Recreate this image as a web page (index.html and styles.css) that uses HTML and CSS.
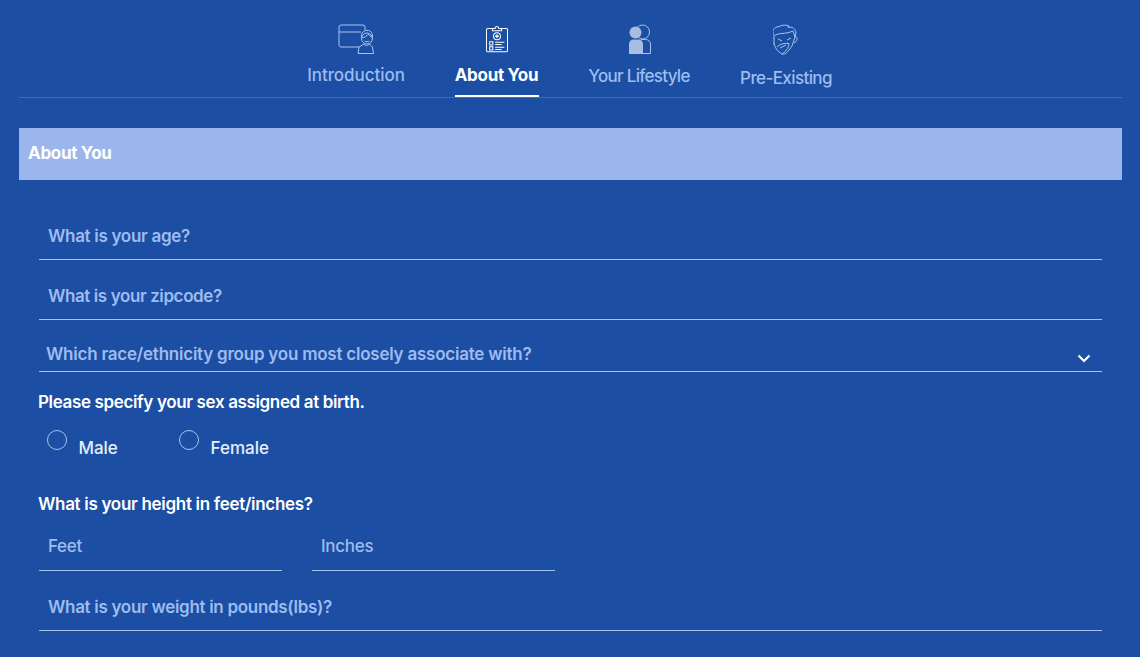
FILE: index.html
```html
<!DOCTYPE html>
<html lang="en">
<head>
<meta charset="utf-8">
<title>About You</title>
<link rel="stylesheet" href="styles.css">
</head>
<body>
<main class="page">
  <nav class="tabs">
    <a class="tab tab-intro">
      <svg class="icon" width="38" height="30" viewBox="-1 0 38 30" fill="none" stroke="currentColor" stroke-width="1">
        <path d="M21 23H3a2 2 0 0 1-2-2V3a2 2 0 0 1 2-2h22a2 2 0 0 1 2 2v3"/>
        <path d="M1 8h22"/>
        <circle cx="29" cy="14.500" r="5.500"/>
        <path d="M23.500 13c-1-4 3-7.500 7-6.500 3.500 1 5 4.500 3.500 8.500"/>
        <path d="M23.500 14c3-.5 6-2 7-4 .5 1.500 2 2.500 4 3"/>
        <path d="M26.500 17c1.500 1 3.500 1 5 0M26 20l-5 3-1 6.500h15.500l-1-6.500-3-3M26 20c1 2 4 2 5.500 0"/>
      </svg>
      <span>Introduction</span>
    </a>
    <a class="tab tab-about is-active">
      <svg class="icon" width="22" height="28" viewBox="0 0 24 29" fill="none" stroke="currentColor" stroke-width="1.100">
        <path d="M7 3H2a1.500 1.500 0 0 0-1.500 1.500V27A1.500 1.500 0 0 0 2 28.500h20a1.500 1.500 0 0 0 1.500-1.500V4.500A1.500 1.500 0 0 0 22 3h-5"/>
        <path d="M7 5.500V3h3c0-3 4-3 4 0h3v2.500z"/>
        <circle cx="12" cy="11.500" r="3.800"/>
        <path d="M12 9.500v4M10 11.500h4" stroke-width="1.500"/>
        <path d="M4 17.500h3.500V21H4zM4 23h3.500v3.500H4z"/>
        <path d="M10 18h10M10 20.500h7M10 23.500h10M10 26h7"/>
      </svg>
      <span>About You</span>
    </a>
    <a class="tab tab-life">
      <svg class="icon" width="22" height="30" viewBox="0 0 22 30" fill="none">
        <circle cx="13.500" cy="8" r="7" stroke="#a9c0e8"/>
        <path d="M14 29.500h7.500V20c0-2.500-2-4.500-5-4.500H12" stroke="#a9c0e8"/>
        <circle cx="6.500" cy="8.500" r="6" fill="#a9bde0"/>
        <path d="M0 30V20c0-2.500 2-4.500 4.500-4.500h5c2.500 0 4.500 2 4.500 4.500v10z" fill="#a9bde0"/>
      </svg>
      <span>Your Lifestyle</span>
    </a>
    <a class="tab tab-pre">
      <svg class="icon" width="30" height="32" viewBox="4 0 30 32" fill="none" stroke="currentColor" stroke-width="1">
        <path d="M5 11C2 7 5 3 10 2.500 13 .5 18 1 20 2l-1 1.500C23 2 27 5 27 9l-1 4"/>
        <path d="M5 12c5-4 10-1 19-5l2 6"/>
        <path d="M5 12v6c0 5 4 10 8 12 4 1 7-4 10-8l3-9"/>
        <path d="M4.500 14C1 13 0 18 5 20M26 13c3-1 3 4-1 6"/>
        <path d="M9 15l4 2M18 16l4-2"/>
        <path d="M8 23c3-3 7-4 12-3.500 0 4.500-4 8.500-7 10.500M11 24l6-3"/>
      </svg>
      <span>Pre-Existing</span>
    </a>
  </nav>

  <h1 class="band">About You</h1>

  <form class="form">
    <div class="field field-age">What is your age?</div>
    <div class="field field-zip">What is your zipcode?</div>
    <div class="field field-select">
      <span>Which race/ethnicity group you most closely associate with?</span>
      <svg class="chevron" width="14" height="9" viewBox="0 0 14 9" fill="none" stroke="#fff" stroke-width="2.200"><path d="M1.500 1.500 7 7l5.500-5.500"/></svg>
    </div>

    <p class="label label-sex">Please specify your sex assigned at birth.</p>
    <div class="radios">
      <label class="radio radio-male"><span class="dot"></span><span class="radio-text">Male</span></label>
      <label class="radio"><span class="dot"></span><span class="radio-text">Female</span></label>
    </div>

    <p class="label label-height">What is your height in feet/inches?</p>
    <div class="pair">
      <div class="field field-half">Feet</div>
      <div class="field field-half">Inches</div>
    </div>
    <div class="field field-weight">What is your weight in pounds(lbs)?</div>
  </form>
</main>
</body>
</html>
```
FILE: styles.css
```css
* { box-sizing: border-box; }
html, body { margin: 0; height: 657px; overflow: hidden; }
body {
  background: #1c4ea3;
  font-family: Inter, "Noto Sans", sans-serif;
  color: #9dbcf0;
}
.page { padding: 0 18px 0 19px; }

.tabs {
  height: 98px;
  display: flex;
  justify-content: center;
  gap: 50px;
  border-bottom: 1px solid #3a6cc0;
}
.tab {
  display: flex;
  flex-direction: column;
  align-items: center;
  font-size: 17px;
  font-weight: 500;
  color: #9dbcf0;
  white-space: nowrap;
}
.tab span { line-height: 24px; }
.icon { display: block; color: #a9c3ee; }
.tab-intro { width: 97px; padding-top: 24px; letter-spacing: -0.05px; }
.tab-intro span { margin-top: 9px; }
.tab-about { width: 84px; padding-top: 25px; height: 97px; color: #fff; font-weight: 700; letter-spacing: -0.3px; border-bottom: 2px solid #fff; }
.tab-about .icon { color: #fff; }
.tab-about span { margin-top: 10px; }
.tab-life { width: 103px; padding-top: 24px; letter-spacing: -0.7px; }
.tab-life span { margin: 10px 2px 0 0; }
.tab-pre { width: 92px; padding-top: 24px; letter-spacing: -0.6px; }
.tab-pre span { margin: 10px 3px 0 0; }

.band {
  margin: 30px 0 0;
  height: 52px;
  padding: 0 9px;
  background: #9ab6ec;
  color: #fff;
  font-size: 17px;
  font-weight: 700;
  line-height: 50px;
  letter-spacing: -0.3px;
  width: 1103px;
}

.form { padding: 0 20px; width: 1103px; }
.field {
  border-bottom: 1px solid #a6c2f0;
  padding-left: 9px;
  font-size: 17px;
  font-weight: 600;
  letter-spacing: -0.3px;
  color: #9dbcf0;
}
.field-age { margin-top: 38px; height: 42px; line-height: 36px; }
.field-zip { margin-top: 18px; height: 42px; line-height: 36px; letter-spacing: -0.4px; }
.field-select {
  margin-top: 18px;
  height: 34px;
  padding: 0 11px 0 7px;
  line-height: 33px;
  letter-spacing: -0.23px;
  display: flex;
  justify-content: space-between;
}
.chevron { align-self: flex-end; margin-bottom: 8px; }
.label {
  margin: 0 0 0 -1px;
  color: #fff;
  font-size: 17px;
  font-weight: 600;
  letter-spacing: -0.36px;
  line-height: 24px;
}
.label-sex { margin-top: 18px; }
.label-height { margin-top: 24px; letter-spacing: -0.3px; }
.radios { display: flex; gap: 61px; margin-top: 16px; padding-left: 7.5px; height: 38px; }
.radio { display: flex; color: #e6eefc; font-size: 17px; font-weight: 500; }
.radio-male { letter-spacing: -0.1px; }
.dot {
  width: 20px;
  height: 20px;
  border: 1px solid #a6c2f0;
  border-radius: 50%;
}
.radio-text { margin: 6px 0 0 12px; line-height: 24px; }
.pair { display: flex; gap: 30px; margin-top: 11px; }
.field-half { width: 243px; height: 44px; line-height: 38px; font-weight: 500; }
.field-weight { margin-top: 18px; height: 42px; line-height: 36px; }
```
